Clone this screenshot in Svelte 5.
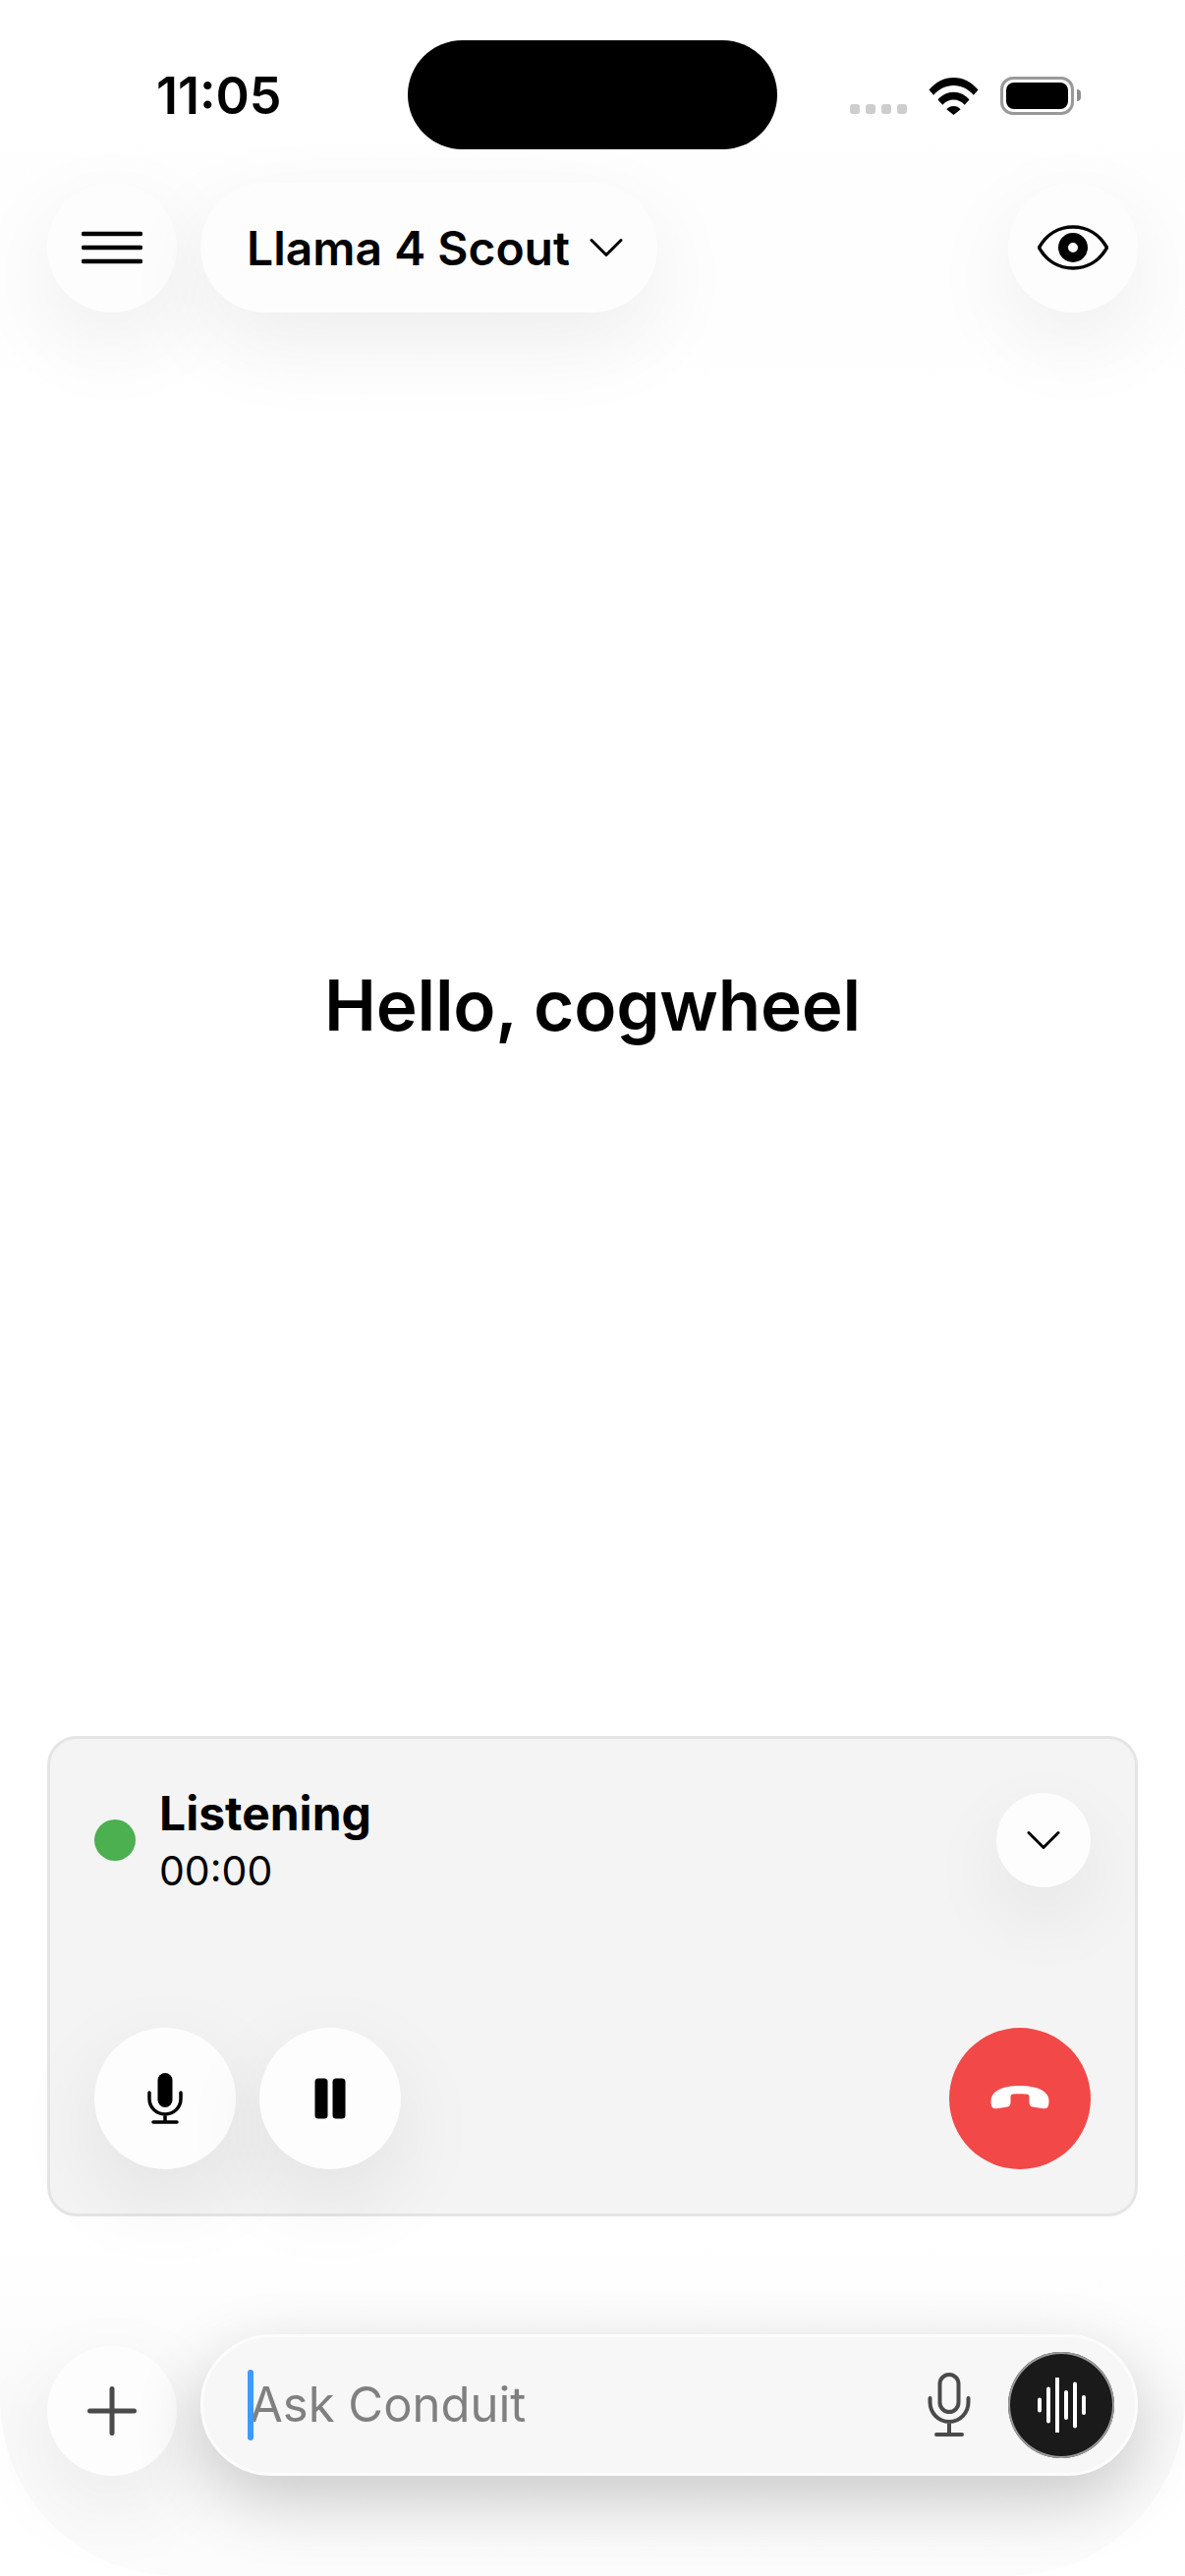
<script>
  // waveform bars of the voice button: x position and height
  const bars = [
    { x: 3, h: 11 },
    { x: 12, h: 33 },
    { x: 21, h: 54 },
    { x: 30, h: 26 },
    { x: 39, h: 43 },
    { x: 48, h: 16 }
  ];
</script>

<div class="screen">
  <div class="top-haze"></div>
  <div class="bottom-haze"></div>

  <header class="status">
    <span class="time">11:05</span>
    <div class="island"></div>
    <div class="indicators">
      <div class="signal"><i></i><i></i><i></i><i></i></div>
      <svg class="wifi" viewBox="0 0 50 38" aria-hidden="true">
        <path d="M0 12.500C6.500 4.600 15.300 0 25 0s18.500 4.600 25 12.500l-4.700 5.200C40 11.500 32.900 7.900 25 7.900S10 11.500 4.700 17.700Z" />
        <path d="M9 22.500C13 17.700 18.700 14.700 25 14.700s12 3 16 7.800l-4.800 5.300C33.400 24.500 29.400 22.500 25 22.500s-8.400 2-11.200 5.300Z" />
        <path d="M17.800 32.200c1.800-2.100 4.300-3.300 7.200-3.300s5.400 1.200 7.200 3.300L25 38Z" />
      </svg>
      <div class="battery"><div class="fill"></div></div>
      <div class="cap"></div>
    </div>
  </header>

  <nav class="toolbar">
    <button class="round" aria-label="Menu">
      <svg width="62" height="34" viewBox="0 0 62 34" aria-hidden="true">
        <path d="M2 3h58M2 17h58M2 31h58" fill="none" stroke="#000" stroke-width="4.500" stroke-linecap="round" />
      </svg>
    </button>
    <button class="model">
      <span>Llama 4 Scout</span>
      <svg width="34" height="20" viewBox="0 0 34 20" aria-hidden="true">
        <path d="M2 2.500l15 15 15-15" fill="none" stroke="#000" stroke-width="3" stroke-linecap="round" stroke-linejoin="round" />
      </svg>
    </button>
    <div class="spacer"></div>
    <button class="round" aria-label="Visibility">
      <svg width="72" height="46" viewBox="0 0 72 46" aria-hidden="true">
        <path d="M1.500 23C9 9.500 21.500 2 36 2s27 7.500 34.500 21C63 36.500 50.500 44 36 44S9 36.500 1.500 23Z" fill="none" stroke="#000" stroke-width="3.500" stroke-linejoin="round" />
        <circle cx="36" cy="23" r="10" fill="none" stroke="#000" stroke-width="10" />
      </svg>
    </button>
  </nav>

  <main class="greeting">
    <h1>Hello, cogwheel</h1>
  </main>

  <section class="call">
    <div class="call-head">
      <div class="dot"></div>
      <div class="call-text">
        <div class="call-title">Listening</div>
        <div class="call-timer">00:00</div>
      </div>
      <button class="round small" aria-label="Collapse">
        <svg width="34" height="20" viewBox="0 0 34 20" aria-hidden="true">
          <path d="M2 2.500l15 15 15-15" fill="none" stroke="#000" stroke-width="3" stroke-linecap="round" stroke-linejoin="round" />
        </svg>
      </button>
    </div>
    <div class="call-actions">
      <button class="round big" aria-label="Mute">
        <svg width="36" height="52" viewBox="0 0 36 52" aria-hidden="true">
          <rect x="10.500" y="0" width="15" height="35" rx="7.500" fill="#000" />
          <path d="M2 20v6c0 9 7 16 16 16s16-7 16-16v-6M18 42v8M6 50h24" fill="none" stroke="#000" stroke-width="3.500" stroke-linecap="round" />
        </svg>
      </button>
      <button class="round big" aria-label="Pause">
        <svg width="32" height="42" viewBox="0 0 32 42" aria-hidden="true">
          <rect x="0.500" y="0.500" width="13" height="41" rx="3.500" fill="#000" />
          <rect x="18.500" y="0.500" width="13" height="41" rx="3.500" fill="#000" />
        </svg>
      </button>
      <div class="spacer"></div>
      <button class="round big hangup" aria-label="End call">
        <svg width="60" height="24" viewBox="0 0 60 24" aria-hidden="true">
          <path d="M30 0C18 0 7 2.500 2.500 9 .5 12 0 16 1 20c.5 2.500 2.500 3.500 5 3.200l11-1.600c2.500-.4 3.500-2 3.500-4.300v-6c0-1.800 1-2.500 2.500-2.700 4.500-.6 7.500-.6 14 0 1.500.2 2.500.9 2.500 2.700v6c0 2.300 1 3.900 3.500 4.300l11 1.600c2.500.3 4.500-.7 5-3.200 1-4 .5-8-1.500-11C53 2.500 42 0 30 0Z" fill="#fff" />
        </svg>
      </button>
    </div>
  </section>

  <footer class="composer">
    <button class="round plus" aria-label="Add">
      <svg width="50" height="50" viewBox="0 0 50 50" aria-hidden="true">
        <path d="M25 2.500v45M2.500 25h45" fill="none" stroke="#4a4a4a" stroke-width="5" stroke-linecap="round" />
      </svg>
    </button>
    <div class="input">
      <div class="field">
        <span class="caret"></span>
        <span class="placeholder">Ask Conduit</span>
      </div>
      <svg class="dictate" width="44" height="66" viewBox="0 0 44 66" aria-hidden="true">
        <rect x="12.500" y="2" width="19" height="38" rx="9.500" fill="none" stroke="#4a4a4a" stroke-width="4" />
        <path d="M2.500 26v4c0 11 8.500 20 19.500 20s19.500-9 19.500-20v-4M22 50v13M9 63h26" fill="none" stroke="#4a4a4a" stroke-width="4" stroke-linecap="round" />
      </svg>
      <button class="voice" aria-label="Voice mode">
        <svg width="51" height="56" viewBox="0 0 51 56" aria-hidden="true">
          {#each bars as bar}
            <line x1={bar.x} x2={bar.x} y1={28 - bar.h / 2} y2={28 + bar.h / 2} stroke="#fff" stroke-width="4" stroke-linecap="round" />
          {/each}
        </svg>
      </button>
    </div>
  </footer>
</div>

<style>
  :global(body) {
    margin: 0;
    background: #fff;
  }

  .screen {
    position: relative;
    width: 1206px;
    height: 2622px;
    overflow: hidden;
    display: flex;
    flex-direction: column;
    background: #fff;
    font-family: Inter, "Liberation Sans", sans-serif;
    color: #000;
  }

  .top-haze {
    position: absolute;
    inset: 0 0 auto 0;
    height: 420px;
    background: linear-gradient(to bottom, #fff 0, #fff 120px, #fefefe 200px, #fefefe 300px, #fff 420px);
  }

  .bottom-haze {
    position: absolute;
    left: 0;
    right: 0;
    bottom: 0;
    height: 340px;
    border-radius: 0 0 180px 180px;
    background: linear-gradient(to bottom, #fff 0, #fbfbfb 130px, #f9f9f9 180px, #fcfcfc 100%);
  }

  .status,
  .toolbar,
  .greeting,
  .call,
  .composer {
    position: relative;
  }

  .status {
    height: 186px;
    flex: none;
    box-sizing: border-box;
    padding: 41px 0 0 159px;
    display: flex;
    align-items: flex-start;
  }

  .time {
    width: 256px;
    margin-top: 29px;
    font-size: 52px;
    line-height: 56px;
    font-weight: 600;
  }

  .island {
    width: 376px;
    height: 111px;
    border-radius: 56px;
    background: #000;
  }

  .indicators {
    margin: 37px 0 0 74px;
    height: 40px;
    display: flex;
    align-items: flex-start;
  }

  .signal {
    display: flex;
    gap: 6px;
    margin-top: 28px;
    margin-right: 22px;
  }

  .signal i {
    width: 10px;
    height: 10px;
    border-radius: 3px;
    background: #cdcdcd;
  }

  .wifi {
    width: 51px;
    height: 38px;
    margin-top: 1px;
    margin-right: 22px;
    fill: #000;
  }

  .battery {
    box-sizing: border-box;
    width: 75px;
    height: 39px;
    padding: 3px;
    border: 3px solid #999;
    border-radius: 13px;
  }

  .fill {
    height: 100%;
    border-radius: 8px;
    background: #000;
  }

  .cap {
    width: 4px;
    height: 12px;
    margin: 13px 0 0 3px;
    border-radius: 0 4px 4px 0;
    background: #8e8e8e;
  }

  .toolbar {
    flex: none;
    height: 132px;
    padding: 0 48px;
    display: flex;
    gap: 24px;
  }

  .spacer {
    flex: 1;
  }

  button {
    border: 0;
    padding: 0;
    font: inherit;
    color: inherit;
  }

  .round {
    flex: none;
    width: 132px;
    height: 132px;
    border-radius: 50%;
    display: flex;
    align-items: center;
    justify-content: center;
    background: #fdfdfd;
    box-shadow: 0 30px 90px rgba(0, 0, 0, 0.07);
  }

  .model {
    height: 132px;
    width: 465px;
    box-sizing: border-box;
    padding: 0 35px 0 47px;
    border-radius: 66px;
    display: flex;
    align-items: center;
    justify-content: space-between;
    background: #fdfdfd;
    box-shadow: 0 30px 90px rgba(0, 0, 0, 0.07);
    font-size: 48px;
    font-weight: 600;
    white-space: nowrap;
  }

  .greeting {
    flex: 1;
    display: flex;
    align-items: center;
    justify-content: center;
    padding-bottom: 39px;
  }

  h1 {
    margin: 0;
    font-size: 71px;
    line-height: 88px;
    font-weight: 600;
    letter-spacing: -0.2px;
  }

  .call {
    flex: none;
    box-sizing: border-box;
    height: 489px;
    margin: 0 48px 120px;
    padding: 48px 45px 45px;
    border: 3px solid #e5e5e5;
    border-radius: 30px;
    background: #f4f4f4;
    display: flex;
    flex-direction: column;
    justify-content: space-between;
  }

  .call-head {
    display: flex;
    align-items: center;
  }

  .dot {
    width: 42px;
    height: 42px;
    margin-right: 24px;
    border-radius: 50%;
    background: #4caf50;
  }

  .call-text {
    flex: 1;
  }

  .call-title {
    font-size: 48px;
    line-height: 56px;
    font-weight: 700;
  }

  .call-timer {
    margin-top: 6px;
    font-size: 41px;
    line-height: 48px;
  }

  .small {
    width: 96px;
    height: 96px;
    box-shadow: 0 30px 80px rgba(0, 0, 0, 0.07);
  }

  .call-actions {
    display: flex;
    gap: 24px;
  }

  .big {
    width: 144px;
    height: 144px;
    box-shadow: 0 30px 90px rgba(0, 0, 0, 0.08);
  }

  .hangup {
    background: #f24848;
    box-shadow: none;
  }

  .hangup svg {
    margin-bottom: 3px;
  }

  .composer {
    flex: none;
    height: 246px;
    box-sizing: border-box;
    padding: 0 48px;
    display: flex;
    align-items: flex-start;
    gap: 24px;
  }

  .plus {
    margin-top: 12px;
  }

  .input {
    flex: 1;
    box-sizing: border-box;
    height: 144px;
    padding: 0 21px 0 45px;
    border: 3px solid #fcfcfc;
    border-radius: 72px;
    display: flex;
    align-items: center;
    background: #f7f7f7;
    box-shadow: 0 24px 70px rgba(0, 0, 0, 0.2);
  }

  .field {
    flex: 1;
    position: relative;
    display: flex;
    align-items: center;
  }

  .caret {
    position: absolute;
    left: 0;
    top: -6px;
    width: 6px;
    height: 72px;
    border-radius: 3px;
    background: #3b9bff;
  }

  .placeholder {
    margin-left: 2px;
    font-size: 49px;
    line-height: 60px;
    color: #808080;
  }

  .dictate {
    margin-right: 38px;
  }

  .voice {
    width: 108px;
    height: 108px;
    border-radius: 50%;
    display: flex;
    align-items: center;
    justify-content: center;
    background: #1a1a1a;
    box-shadow: 0 0 0 2px #9a9a9a inset;
  }
</style>
